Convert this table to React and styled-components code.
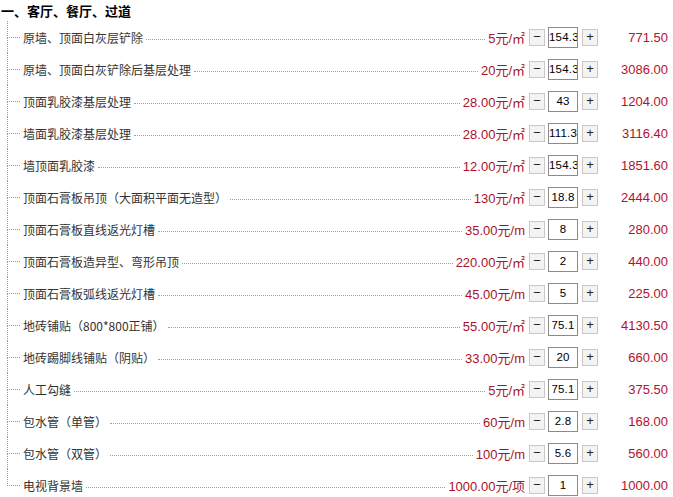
import styled, { createGlobalStyle } from "styled-components";

const items = [
  { name: "原墙、顶面白灰层铲除", price: "5元/㎡", qty: "154.3", total: "771.50" },
  { name: "原墙、顶面白灰铲除后基层处理", price: "20元/㎡", qty: "154.3", total: "3086.00" },
  { name: "顶面乳胶漆基层处理", price: "28.00元/㎡", qty: "43", total: "1204.00" },
  { name: "墙面乳胶漆基层处理", price: "28.00元/㎡", qty: "111.3", total: "3116.40" },
  { name: "墙顶面乳胶漆", price: "12.00元/㎡", qty: "154.3", total: "1851.60" },
  { name: "顶面石膏板吊顶（大面积平面无造型）", price: "130元/㎡", qty: "18.8", total: "2444.00" },
  { name: "顶面石膏板直线返光灯槽", price: "35.00元/m", qty: "8", total: "280.00" },
  { name: "顶面石膏板造异型、弯形吊顶", price: "220.00元/㎡", qty: "2", total: "440.00" },
  { name: "顶面石膏板弧线返光灯槽", price: "45.00元/m", qty: "5", total: "225.00" },
  { name: "地砖铺贴（800*800正铺）", price: "55.00元/㎡", qty: "75.1", total: "4130.50" },
  { name: "地砖踢脚线铺贴（阴贴）", price: "33.00元/m", qty: "20", total: "660.00" },
  { name: "人工勾缝", price: "5元/㎡", qty: "75.1", total: "375.50" },
  { name: "包水管（单管）", price: "60元/m", qty: "2.8", total: "168.00" },
  { name: "包水管（双管）", price: "100元/m", qty: "5.6", total: "560.00" },
  { name: "电视背景墙", price: "1000.00元/项", qty: "1", total: "1000.00" },
];

const GlobalStyle = createGlobalStyle`
  body {
    margin: 0;
    background: #ffffff;
    font-family: "Liberation Sans", "Noto Sans CJK SC", sans-serif;
  }
`;

const Page = styled.div`
  width: 673px;
  padding: 0 5px 0 0;
  box-sizing: border-box;
`;

const Heading = styled.h3`
  margin: 0;
  padding-left: 1px;
  height: 21px;
  line-height: 22px;
  font-size: 13px;
  font-weight: bold;
  color: #000;
  font-family: "Noto Sans CJK SC", sans-serif;
`;

const List = styled.ul`
  list-style: none;
  margin: 0;
  padding: 0 0 0 7px;
`;

const Row = styled.li`
  display: flex;
  align-items: center;
  height: 32px;
`;

const Branch = styled.div`
  display: flex;
  flex-direction: column;
  align-self: stretch;
  width: 13px;
  flex: none;
`;

const BranchTop = styled.div`
  flex: 1;
  border-left: 1px dotted #999;
  border-bottom: 1px dotted #999;
`;

const BranchBottom = styled.div`
  flex: 1;
  border-left: 1px dotted ${(p) => (p.$last ? "transparent" : "#999")};
`;

const Name = styled.span`
  margin-left: 3px;
  font-size: 12px;
  color: #333;
  font-family: "Noto Sans CJK SC", sans-serif;
  white-space: nowrap;
`;

const Leader = styled.span`
  flex: 1;
  margin: 0 3px;
  border-bottom: 1px dotted #e2808f;
  align-self: center;
  transform: translateY(2px);
`;

const Price = styled.span`
  font-size: 13px;
  color: #a8122c;
  white-space: nowrap;
`;

const StepButton = styled.button`
  width: 16px;
  height: 17px;
  padding: 0;
  margin-left: ${(p) => p.$gap}px;
  border: 1px solid #c8c8c8;
  background: #f3f3f3;
  color: #222;
  font-size: 13px;
  line-height: 14px;
  font-family: "Liberation Sans", sans-serif;
`;

const Qty = styled.input`
  width: 30px;
  height: 21px;
  box-sizing: border-box;
  margin-left: 3px;
  padding: 0;
  border: 1px solid #8a8a8a;
  text-align: center;
  font-size: 11.5px;
  letter-spacing: 0.2px;
  font-family: "Liberation Sans", sans-serif;
  color: #000;
`;

const Total = styled.span`
  width: 70px;
  text-align: right;
  font-size: 13px;
  color: #b5102e;
`;

export default function App() {
  return (
    <Page>
      <GlobalStyle />
      <Heading>一、客厅、餐厅、过道</Heading>
      <List>
        {items.map((item, i) => (
          <Row key={item.name}>
            <Branch>
              <BranchTop />
              <BranchBottom $last={i === items.length - 1} />
            </Branch>
            <Name>{item.name}</Name>
            <Leader />
            <Price>{item.price}</Price>
            <StepButton $gap={4}>−</StepButton>
            <Qty defaultValue={item.qty} />
            <StepButton $gap={4}>+</StepButton>
            <Total>{item.total}</Total>
          </Row>
        ))}
      </List>
    </Page>
  );
}
